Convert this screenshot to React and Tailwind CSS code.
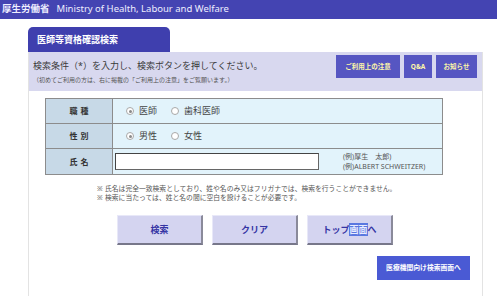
import React from "react";

const jp = "font-['Noto_Sans','Noto_Sans_CJK_JP',sans-serif]";

function Radio({ checked }) {
  return (
    <span className="w-[8px] h-[8px] rounded-full border border-[#a8a8a8] bg-white flex items-center justify-center">
      {checked && <span className="w-[3px] h-[3px] rounded-full bg-[#8a8a8a]" />}
    </span>
  );
}

function Row({ label, children, last }) {
  return (
    <div className={`flex h-[25px] ${last ? "" : "border-b border-[#8c8c8c]"}`}>
      <div className="w-[67px] bg-[#c7d9e7] border-r border-[#8c8c8c] flex items-center justify-center text-[8px] font-bold text-[#333] tracking-[3px] pl-[3px]">
        {label}
      </div>
      <div className="flex-1 bg-[#e2f3fb] flex items-center">{children}</div>
    </div>
  );
}

function Choice({ checked, text }) {
  return (
    <span className="flex items-center gap-[5px] text-[9px] text-[#444]">
      <Radio checked={checked} />
      {text}
    </span>
  );
}

function BigButton({ children }) {
  return (
    <button className="w-[86px] h-[30px] bg-[#d4d4f0] border-t border-l border-[#e8e8f8] border-r-2 border-b-2 border-r-[#8a8a9a] border-b-[#77778a] text-[9px] font-bold text-[#3434a4] flex items-center justify-center">
      {children}
    </button>
  );
}

export default function App() {
  return (
    <div className={`w-[500px] h-[296px] bg-white overflow-hidden ${jp}`}>
      <div className="h-[19px] w-[497px] bg-[#4444b2] flex items-center pl-[2px] text-[#eef] text-[9.5px]">
        <span className="font-bold">厚生労働省</span>
        <span className="ml-[7px]">Ministry of Health, Labour and Welfare</span>
      </div>

      <div className="ml-[28px] w-[455px] mt-[8px] h-[269px] flex flex-col">
        <div className="w-[142px] h-[25px] bg-[#3f3fae] rounded-t-[5px] flex items-center pl-[9px] text-white text-[9px] font-bold">
          医師等資格確認検索
        </div>

        <div className="flex-1 border-x border-[#e3e3e3] flex flex-col">
          <div className="h-[39px] bg-[#d8d8ef] flex justify-between">
            <div className="pl-[4px] pt-[8px] flex flex-col">
              <span className="text-[9px] leading-[12px] text-[#3a3a3a]">検索条件（*）を入力し、検索ボタンを押してください。</span>
              <span className="text-[6px] leading-[8px] text-[#555] mt-[4px]">（初めてご利用の方は、右に掲載の「ご利用上の注意」をご覧願います。）</span>
            </div>
            <div className="flex gap-[4px] pt-[3px] pr-[5px] items-start">
              <span className="w-[64px] h-[23px] bg-[#5656c2] text-[#fff8a8] text-[6.5px] font-bold flex items-center justify-center">ご利用上の注意</span>
              <span className="w-[28px] h-[23px] bg-[#5656c2] text-[#fff8a8] text-[6.5px] font-bold flex items-center justify-center">Q&amp;A</span>
              <span className="w-[41px] h-[23px] bg-[#5656c2] text-[#fff8a8] text-[6.5px] font-bold flex items-center justify-center">お知らせ</span>
            </div>
          </div>

          <div className="ml-[16px] mt-[7px] w-[398px] border border-[#8c8c8c] flex flex-col">
            <Row label="職種">
              <div className="flex items-center pl-[13px] gap-[14px]">
                <Choice checked text="医師" />
                <Choice text="歯科医師" />
              </div>
            </Row>
            <Row label="性別">
              <div className="flex items-center pl-[13px] gap-[14px]">
                <Choice checked text="男性" />
                <Choice text="女性" />
              </div>
            </Row>
            <Row label="氏名" last>
              <div className="flex items-center w-full">
                <div className="ml-[2px] w-[204px] h-[17px] bg-white border border-[#666] border-t-[#444] border-l-[#444]" />
                <div className="ml-[24px] flex flex-col text-[7px] leading-[10px] text-[#555]">
                  <span>(例)厚生　太郎)</span>
                  <span>(例)ALBERT SCHWEITZER)</span>
                </div>
              </div>
            </Row>
          </div>

          <div className="ml-[68px] mt-[9px] flex flex-col text-[6.8px] leading-[9px] text-[#555]">
            <div className="flex"><span className="w-[8px]">※</span><span>氏名は完全一致検索としており、姓や名のみ又はフリガナでは、検索を行うことができません。</span></div>
            <div className="flex"><span className="w-[8px]">※</span><span>検索に当たっては、姓と名の間に空白を設けることが必要です。</span></div>
          </div>

          <div className="ml-[88px] mt-[13px] flex gap-[9px]">
            <BigButton>検索</BigButton>
            <BigButton>クリア</BigButton>
            <BigButton>
              トップ<span className="bg-[#5a78e0] text-[#e8ecff]">画面</span>へ
            </BigButton>
          </div>

          <div className="self-end mr-[12px] mt-[11px] w-[93px] h-[24px] bg-[#4a5ad4] flex items-center justify-center text-white text-[6.8px] font-bold">
            医療機関向け検索画面へ
          </div>
        </div>
      </div>
    </div>
  );
}
